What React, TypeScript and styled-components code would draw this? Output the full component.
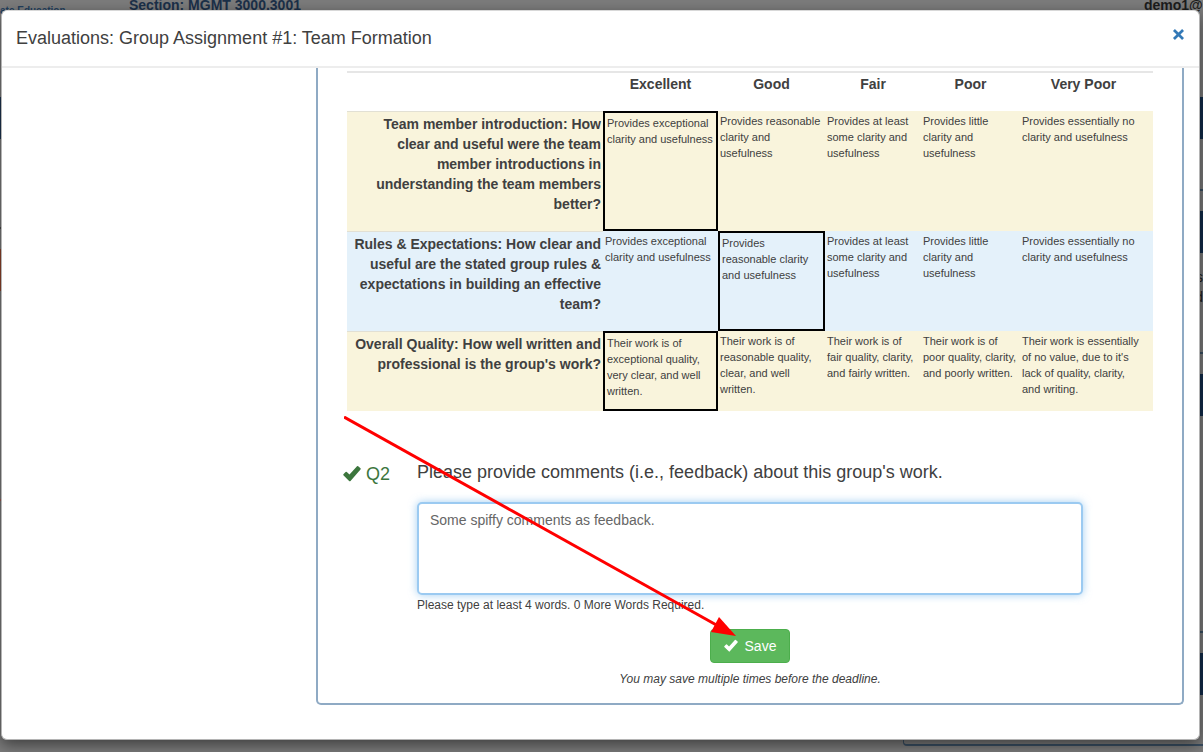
import React, { useState } from "react";
import styled, { createGlobalStyle } from "styled-components";

const GlobalStyle = createGlobalStyle`
  *, *::before, *::after { box-sizing: border-box; }
  html, body, #root { height: 100%; }
  body {
    margin: 0;
    overflow: hidden;
    background: #7c7c7c;
    color: #404040;
    font: 14px/20px "Liberation Sans", Arial, sans-serif;
  }
`;

const Shell = styled.div`
  position: relative;
  min-height: 100%;
  overflow: hidden;
`;

/* The dimmed course page under the dialog */
const TopBar = styled.header`
  display: flex;
  align-items: flex-start;
  height: 97px;
  font-size: 14px;
  font-weight: bold;
  line-height: 10px;
  white-space: nowrap;
`;

const Brand = styled.span`
  width: 129px;
  padding-top: 6px;
  color: #223f5e;
  font-size: 10px;
`;

const Section = styled.span`
  flex: 1;
  color: #1b3049;
`;

const Account = styled.div`
  width: 59px;
  color: #1c1c1c;
`;

const Courses = styled.div`
  display: flex;
  justify-content: space-between;
`;

const SideColumn = styled.div`
  display: flex;
  flex-direction: column;
  gap: 20px;
  width: 300px;
`;

const SideCard = styled.section<{
  $height: number;
  $head: string;
  $line: string;
  $edge?: boolean;
}>`
  height: ${(p) => p.$height}px;
  padding-top: 14px;
  border-top: 42px solid ${(p) => p.$head};
  border-bottom: 2px solid ${(p) => p.$line};
  border-left: ${(p) => (p.$edge ? `1px solid ${p.$line}` : "0")};
  border-radius: 0 0 0 ${(p) => (p.$edge ? 4 : 0)}px;
  color: #1c1c1c;
  text-align: right;
`;

const Dialog = styled.div`
  position: absolute;
  inset: 10px 3px auto 1px;
  border: 1px solid #b4b4b4;
  border-top-color: #d8d8d8;
  border-radius: 6px;
  background: #fff;
  box-shadow: 0 5px 15px rgba(0, 0, 0, 0.5);
`;

const DialogHeader = styled.div`
  display: flex;
  justify-content: space-between;
  align-items: flex-start;
  height: 57px;
  padding: 14px 14px 0;
  border-bottom: 2px solid #ededed;
`;

const Title = styled.h4`
  margin: 0;
  font-size: 18px;
  font-weight: normal;
  line-height: 26px;
`;

const CloseButton = styled.button`
  display: flex;
  padding: 3px 0;
  border: 0;
  background: none;
  cursor: pointer;
`;

const DialogBody = styled.div`
  display: grid;
  grid-template-columns: 300px 1fr;
  padding: 0 15px 34px 14px;
`;

const Panel = styled.form`
  position: relative;
  grid-column: 2;
  padding: 3px 29px 14px;
  border: 2px solid #8faac4;
  border-top: 0;
  border-radius: 0 0 5px 5px;
`;

const Rubric = styled.table`
  width: 100%;
  table-layout: fixed;
  border-collapse: separate;
  border-spacing: 0;

  tr > :last-child {
    padding-right: 8px;
  }
`;

const RatingHead = styled.th`
  height: 40px;
  padding: 1px 2px 0;
  border-top: 2px solid #e6e6e6;
  vertical-align: top;
`;

const CriterionRow = styled.tr<{ $tint: string }>`
  background: ${(p) => p.$tint};
`;

const Criterion = styled.th`
  padding: 2px 2px 17px;
  border-top: 1px solid #e2e0d4;
  text-align: right;
  vertical-align: top;
`;

const Choice = styled.td<{ $selected: boolean }>`
  padding: 2px 2px ${(p) => (p.$selected ? 10 : 14)}px;
  border: ${(p) => (p.$selected ? "2px solid #000" : "0")};
  font-size: 11px;
  line-height: 16px;
  vertical-align: top;
  cursor: pointer;
`;

const Question = styled.div`
  display: grid;
  grid-template-columns: 70px 1fr;
  padding: 49px 70px 0 0;
`;

const QuestionTag = styled.div`
  display: flex;
  align-items: center;
  gap: 5px;
  height: 28px;
  margin-left: -4px;
  color: #3c763d;
  font-size: 18px;
`;

const QuestionText = styled.label`
  margin-bottom: 18px;
  font-size: 18px;
  line-height: 24px;
`;

const Answer = styled.div`
  display: flex;
  grid-column: 2;
  flex-direction: column;
`;

const Comments = styled.textarea`
  height: 93px;
  padding: 6px 11px;
  border: 2px solid #9bcaf1;
  border-radius: 5px;
  outline: 0;
  background: #fff;
  box-shadow: 0 0 8px rgba(102, 175, 233, 0.6);
  color: #666;
  font: inherit;
  resize: none;
`;

const Help = styled.p`
  margin: 0;
  font-size: 12px;
`;

const Actions = styled.div`
  display: flex;
  flex-direction: column;
  align-items: center;
  gap: 6px;
  padding-top: 14px;
`;

const SaveButton = styled.button`
  display: flex;
  align-items: center;
  gap: 7px;
  height: 34px;
  padding: 0 13px;
  border: 1px solid #4cae4c;
  border-radius: 4px;
  background: #5cb85c;
  color: #fff;
  font: inherit;
  cursor: pointer;
`;

const Note = styled.em`
  font-size: 12px;
`;

const Pointer = styled.svg`
  position: absolute;
  top: 348px;
  left: 26px;
  pointer-events: none;
`;

const Check = ({ size }: { size: number }) => (
  <svg width={size} height={size} viewBox="0 0 18 18" aria-hidden="true">
    <path
      fill="currentColor"
      d="M0.4 9.2 2.6 7.1Q3.2 6.6 3.8 7.1L6.5 9.6 14 1.3Q14.6 0.8 15.2 1.3L17.5 3.3Q18 3.9 17.5 4.5L7.5 15.9Q6.8 16.6 6.1 15.9L0.4 10.3Q0 9.7 0.4 9.2Z"
    />
  </svg>
);

const CREAM = "#f9f4dc";
const BLUE = "#e4f1fa";

const ratings = ["Excellent", "Good", "Fair", "Poor", "Very Poor"];
const widths = [256, 115, 107, 96, 99, 133];

const clarity = [
  "Provides exceptional clarity and usefulness",
  "Provides reasonable clarity and usefulness",
  "Provides at least some clarity and usefulness",
  "Provides little clarity and usefulness",
  "Provides essentially no clarity and usefulness",
];

const criteria = [
  {
    label:
      "Team member introduction: How clear and useful were the team member introductions in understanding the team members better?",
    tint: CREAM,
    choices: clarity,
  },
  {
    label:
      "Rules & Expectations: How clear and useful are the stated group rules & expectations in building an effective team?",
    tint: BLUE,
    choices: clarity,
  },
  {
    label: "Overall Quality: How well written and professional is the group's work?",
    tint: CREAM,
    choices: [
      "Their work is of exceptional quality, very clear, and well written.",
      "Their work is of reasonable quality, clear, and well written.",
      "Their work is of fair quality, clarity, and fairly written.",
      "Their work is of poor quality, clarity, and poorly written.",
      "Their work is essentially of no value, due to it's lack of quality, clarity, and writing.",
    ],
  },
];

const leftCards = [
  { height: 132, head: "#1d3552", line: "#4a4a4a" },
  { height: 252, head: "#93452c", line: "#a35c55" },
];

const rightCards = [
  { height: 94, lines: [] },
  { height: 143, lines: ["s", "d"] },
  { height: 259, lines: [] },
  { height: 93, lines: [] },
];

export default function App() {
  const [picked, setPicked] = useState([0, 1, 0]);
  const [comment, setComment] = useState("Some spiffy comments as feedback.");

  const pick = (row: number, col: number) =>
    setPicked(picked.map((value, i) => (i === row ? col : value)));

  return (
    <Shell>
      <GlobalStyle />
      <TopBar>
        <Brand>ate Education</Brand>
        <Section>Section: MGMT 3000.3001</Section>
        <Account>demo1@</Account>
      </TopBar>
      <Courses>
        <SideColumn>
          {leftCards.map((card) => (
            <SideCard key={card.height} $height={card.height} $head={card.head} $line={card.line} />
          ))}
        </SideColumn>
        <SideColumn>
          {rightCards.map((card) => (
            <SideCard key={card.height} $height={card.height} $head="#122c4a" $line="#3a4f63" $edge>
              {card.lines.map((line) => (
                <div key={line}>{line}</div>
              ))}
            </SideCard>
          ))}
        </SideColumn>
      </Courses>

      <Dialog role="dialog" aria-labelledby="dialog-title">
        <DialogHeader>
          <Title id="dialog-title">Evaluations: Group Assignment #1: Team Formation</Title>
          <CloseButton type="button" aria-label="Close">
            <svg width="13" height="13" viewBox="0 0 12 12" aria-hidden="true">
              <path d="M1.8 1.8 10.2 10.2M10.2 1.8 1.8 10.2" stroke="#3379b7" strokeWidth="2.5" />
            </svg>
          </CloseButton>
        </DialogHeader>
        <DialogBody>
          <Panel onSubmit={(event) => event.preventDefault()}>
            <Rubric>
              <colgroup>
                {widths.map((width, i) => (
                  <col key={i} width={width} />
                ))}
              </colgroup>
              <thead>
                <tr>
                  <RatingHead as="td" />
                  {ratings.map((rating) => (
                    <RatingHead key={rating} scope="col">
                      {rating}
                    </RatingHead>
                  ))}
                </tr>
              </thead>
              <tbody>
                {criteria.map((criterion, row) => (
                  <CriterionRow key={criterion.label} $tint={criterion.tint}>
                    <Criterion scope="row">{criterion.label}</Criterion>
                    {criterion.choices.map((choice, col) => (
                      <Choice key={col} $selected={picked[row] === col} onClick={() => pick(row, col)}>
                        {choice}
                      </Choice>
                    ))}
                  </CriterionRow>
                ))}
              </tbody>
            </Rubric>

            <Question>
              <QuestionTag>
                <Check size={18} />
                Q2
              </QuestionTag>
              <QuestionText htmlFor="comments">
                Please provide comments (i.e., feedback) about this group's work.
              </QuestionText>
              <Answer>
                <Comments
                  id="comments"
                  value={comment}
                  onChange={(event) => setComment(event.target.value)}
                />
                <Help>Please type at least 4 words. 0 More Words Required.</Help>
              </Answer>
            </Question>

            <Actions>
              <SaveButton type="submit">
                <Check size={14} />
                Save
              </SaveButton>
              <Note>You may save multiple times before the deadline.</Note>
            </Actions>

            <Pointer width="394" height="222" viewBox="0 0 394 222" aria-hidden="true">
              <path d="M0 1 376 211" stroke="#f00" strokeWidth="3" />
              <path d="M392 220 367 216 375 201Z" fill="#f00" />
            </Pointer>
          </Panel>
        </DialogBody>
      </Dialog>
    </Shell>
  );
}
